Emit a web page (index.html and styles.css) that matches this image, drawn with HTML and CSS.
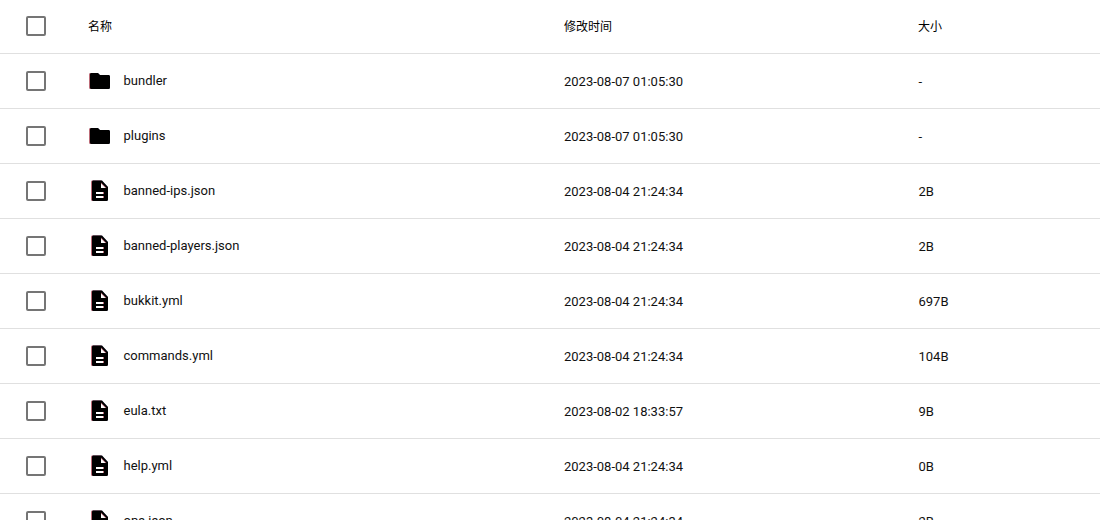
FILE: index.html
```html
<!DOCTYPE html>
<html lang="zh-CN">
<head>
    <meta charset="UTF-8">
    <meta name="viewport" content="width=device-width, initial-scale=1.0">
    <title>文件列表</title>
    <link rel="stylesheet" href="styles.css">
</head>
<body>
    <svg class="icon-defs" width="0" height="0">
        <symbol id="icon-folder" viewBox="0 0 24 24">
            <path d="M10,4H3.5C2.6,4 2,4.6 2,5.5V18.5A1.5,1.5 0 0,0 3.5,20H20.5A1.5,1.5 0 0,0 22,18.5V7.5C22,6.6 21.4,6 20.5,6H12L10,4Z"/>
        </symbol>
        <symbol id="icon-file" viewBox="0 0 24 24">
            <path d="M13,9H18.5L13,3.5V9M5.5,1.5H14L20,8V20.5A1.5,1.5 0 0,1 18.5,22H5.5C4.6,22 4,21.4 4,20.5V3C4,2.1 4.6,1.5 5.5,1.5M16,19V17H8V19H16M16,15V13H8V15H16Z"/>
        </symbol>
    </svg>

    <table class="file-table">
        <thead>
            <tr>
                <th class="col-check"><span class="checkbox"></span></th>
                <th class="col-name">名称</th>
                <th class="col-time">修改时间</th>
                <th class="col-size">大小</th>
            </tr>
        </thead>
        <tbody>
            <tr>
                <td><span class="checkbox"></span></td>
                <td><div class="file-name"><svg class="file-icon"><use href="#icon-folder"/></svg><span class="name-text">bundler</span></div></td>
                <td>2023-08-07 01:05:30</td>
                <td class="size-cell">-</td>
            </tr>
            <tr>
                <td><span class="checkbox"></span></td>
                <td><div class="file-name"><svg class="file-icon"><use href="#icon-folder"/></svg><span class="name-text">plugins</span></div></td>
                <td>2023-08-07 01:05:30</td>
                <td class="size-cell">-</td>
            </tr>
            <tr>
                <td><span class="checkbox"></span></td>
                <td><div class="file-name"><svg class="file-icon"><use href="#icon-file"/></svg><span class="name-text">banned-ips.json</span></div></td>
                <td>2023-08-04 21:24:34</td>
                <td class="size-cell">2B</td>
            </tr>
            <tr>
                <td><span class="checkbox"></span></td>
                <td><div class="file-name"><svg class="file-icon"><use href="#icon-file"/></svg><span class="name-text">banned-players.json</span></div></td>
                <td>2023-08-04 21:24:34</td>
                <td class="size-cell">2B</td>
            </tr>
            <tr>
                <td><span class="checkbox"></span></td>
                <td><div class="file-name"><svg class="file-icon"><use href="#icon-file"/></svg><span class="name-text">bukkit.yml</span></div></td>
                <td>2023-08-04 21:24:34</td>
                <td class="size-cell">697B</td>
            </tr>
            <tr>
                <td><span class="checkbox"></span></td>
                <td><div class="file-name"><svg class="file-icon"><use href="#icon-file"/></svg><span class="name-text">commands.yml</span></div></td>
                <td>2023-08-04 21:24:34</td>
                <td class="size-cell">104B</td>
            </tr>
            <tr>
                <td><span class="checkbox"></span></td>
                <td><div class="file-name"><svg class="file-icon"><use href="#icon-file"/></svg><span class="name-text">eula.txt</span></div></td>
                <td>2023-08-02 18:33:57</td>
                <td class="size-cell">9B</td>
            </tr>
            <tr>
                <td><span class="checkbox"></span></td>
                <td><div class="file-name"><svg class="file-icon"><use href="#icon-file"/></svg><span class="name-text">help.yml</span></div></td>
                <td>2023-08-04 21:24:34</td>
                <td class="size-cell">0B</td>
            </tr>
            <tr>
                <td><span class="checkbox"></span></td>
                <td><div class="file-name"><svg class="file-icon"><use href="#icon-file"/></svg><span class="name-text">ops.json</span></div></td>
                <td>2023-08-04 21:24:34</td>
                <td class="size-cell">2B</td>
            </tr>
        </tbody>
    </table>
</body>
</html>
```

FILE: styles.css
```css
html, body {
    margin: 0;
    height: 100%;
    overflow: hidden;
    background: #fff;
}
body {
    font-family: Roboto, "Noto Sans CJK SC", sans-serif;
    font-size: 13px;
    color: #111;
}
.icon-defs { position: absolute; }
.file-table {
    width: 100%;
    table-layout: fixed;
    border-collapse: collapse;
}
.file-table th,
.file-table td {
    padding: 0;
    text-align: left;
    font-weight: 400;
    border-bottom: 1px solid #e0e0e0;
}
.file-table th {
    height: 50px;
    padding-bottom: 3px;
    font-size: 12px;
    color: #000;
}
.file-table th.col-check {
    height: 51px;
    padding-bottom: 2px;
}
.file-table td { height: 54px; }
.file-table .size-cell { padding-left: 0.5px; }
.col-check { width: 88px; }
.col-name { width: 476px; }
.col-time { width: 354px; }
.checkbox {
    display: block;
    box-sizing: border-box;
    width: 20px;
    height: 20px;
    margin-left: 26px;
    border: 2px solid #757575;
    border-radius: 2px;
}
.file-name {
    display: flex;
    align-items: center;
    gap: 11.5px;
}
.file-icon {
    width: 24px;
    height: 24px;
    fill: #000;
    flex-shrink: 0;
    filter: drop-shadow(-0.5px 0 0 rgba(160,0,0,0.5)) drop-shadow(0.5px 0 0 rgba(0,0,160,0.3));
}
.name-text { position: relative; top: -1px; }
```
